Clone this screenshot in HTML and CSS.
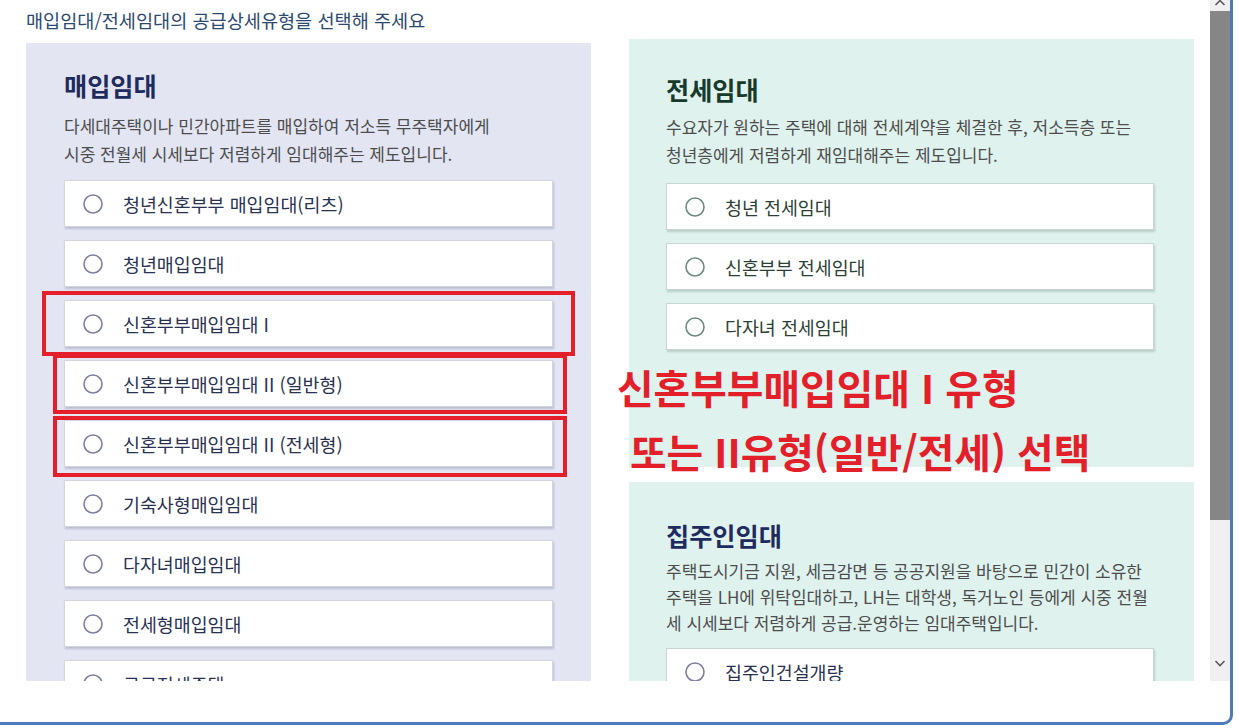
FILE: index.html
```html
<!DOCTYPE html>
<html lang="ko">
<head>
<meta charset="utf-8">
<title>공급상세유형 선택</title>
<link rel="stylesheet" href="styles.css">
</head>
<body>
<div class="window">
  <div class="viewport">
    <div class="content">
      <p class="lead">매입임대/전세임대의 공급상세유형을 선택해 주세요</p>
      <div class="columns">
        <section class="card card-buy">
          <h2 class="card-title">매입임대</h2>
          <p class="card-desc">다세대주택이나 민간아파트를 매입하여 저소득 무주택자에게<br>시중 전월세 시세보다 저렴하게 임대해주는 제도입니다.</p>
          <div class="opt"><svg class="radio" viewBox="0 0 20 20"><circle cx="10" cy="10" r="9"/></svg><span>청년신혼부부 매입임대(리츠)</span></div>
          <div class="opt"><svg class="radio" viewBox="0 0 20 20"><circle cx="10" cy="10" r="9"/></svg><span>청년매입임대</span></div>
          <div class="opt"><svg class="radio" viewBox="0 0 20 20"><circle cx="10" cy="10" r="9"/></svg><span>신혼부부매입임대 I</span></div>
          <div class="opt"><svg class="radio" viewBox="0 0 20 20"><circle cx="10" cy="10" r="9"/></svg><span>신혼부부매입임대 II (일반형)</span></div>
          <div class="opt"><svg class="radio" viewBox="0 0 20 20"><circle cx="10" cy="10" r="9"/></svg><span>신혼부부매입임대 II (전세형)</span></div>
          <div class="opt"><svg class="radio" viewBox="0 0 20 20"><circle cx="10" cy="10" r="9"/></svg><span>기숙사형매입임대</span></div>
          <div class="opt"><svg class="radio" viewBox="0 0 20 20"><circle cx="10" cy="10" r="9"/></svg><span>다자녀매입임대</span></div>
          <div class="opt"><svg class="radio" viewBox="0 0 20 20"><circle cx="10" cy="10" r="9"/></svg><span>전세형매입임대</span></div>
          <div class="opt"><svg class="radio" viewBox="0 0 20 20"><circle cx="10" cy="10" r="9"/></svg><span>공공전세주택</span></div>
        </section>
        <div class="col-right">
          <section class="card card-jeonse">
            <h2 class="card-title">전세임대</h2>
            <p class="card-desc">수요자가 원하는 주택에 대해 전세계약을 체결한 후, 저소득층 또는<br>청년층에게 저렴하게 재임대해주는 제도입니다.</p>
            <div class="opt"><svg class="radio" viewBox="0 0 20 20"><circle cx="10" cy="10" r="9"/></svg><span>청년 전세임대</span></div>
            <div class="opt"><svg class="radio" viewBox="0 0 20 20"><circle cx="10" cy="10" r="9"/></svg><span>신혼부부 전세임대</span></div>
            <div class="opt"><svg class="radio" viewBox="0 0 20 20"><circle cx="10" cy="10" r="9"/></svg><span>다자녀 전세임대</span></div>
          </section>
          <section class="card card-landlord">
            <h2 class="card-title">집주인임대</h2>
            <p class="card-desc">주택도시기금 지원, 세금감면 등 공공지원을 바탕으로 민간이 소유한<br>주택을 LH에 위탁임대하고, LH는 대학생, 독거노인 등에게 시중 전월<br>세 시세보다 저렴하게 공급.운영하는 임대주택입니다.</p>
            <div class="opt"><svg class="radio" viewBox="0 0 20 20"><circle cx="10" cy="10" r="9"/></svg><span>집주인건설개량</span></div>
          </section>
        </div>
      </div>

      <div class="mark mark-1"></div>
      <div class="mark mark-2"></div>
      <div class="mark mark-3"></div>
      <div class="note">
        <div class="note-line">신혼부부매입임대 I 유형</div>
        <div class="note-line note-line-2">또는 II유형(일반/전세) 선택</div>
      </div>
    </div>
    <div class="scrollbar">
      <div class="sb-btn sb-up"><svg viewBox="0 0 20 11" width="20" height="11"><path d="M5.5 5 L10 0.5 L14.5 5"/></svg></div>
      <div class="sb-thumb"></div>
      <div class="sb-track"></div>
      <div class="sb-btn sb-down"><svg viewBox="0 0 20 30" width="20" height="30"><path d="M5.5 10 L10 14.5 L14.5 10"/></svg></div>
    </div>
  </div>
</div>
</body>
</html>
```

FILE: styles.css
```css
* { box-sizing: border-box; }
html, body { margin: 0; padding: 0; background: #fff; }
body { font-family: "Noto Sans CJK KR", "Noto Sans", sans-serif; }

.window {
  width: 1233px;
  height: 725px;
  border-right: 3px solid #4f79bd;
  border-bottom: 3px solid #4f79bd;
  border-bottom-right-radius: 10px;
  overflow: hidden;
  background: #fff;
}
.viewport { display: flex; height: 681px; }
.content {
  flex: 1;
  position: relative;
  overflow: hidden;
  padding: 8px 16px 0 26px;
}

.lead {
  margin: 0 0 7px;
  font-size: 18.6px;
  line-height: 24px;
  color: #2d4a70;
  white-space: nowrap;
}

.columns { display: flex; gap: 38px; align-items: flex-start; }
.col-right { display: flex; flex-direction: column; gap: 15px; }

.card { width: 565px; }
.card-title {
  margin: 0;
  font-size: 25.2px;
  line-height: 30px;
  font-weight: 700;
  color: #1e2b5e;
}
.card-desc {
  margin: 0;
  font-size: 17px;
  line-height: 28px;
  color: #4d4d4d;
  white-space: nowrap;
}

.card-buy {
  margin-top: 4px;
  background: #e3e5f3;
  padding: 27px 38px 20px;
}
.card-buy .card-title { margin-bottom: 12px; }
.card-buy .card-desc { margin-bottom: 12px; }

.card-jeonse {
  height: 428px;
  background: #dff2ee;
  padding: 35px 40px 0 37px;
}
.card-jeonse .card-title { color: #173a2d; margin-bottom: 9px; }
.card-jeonse .card-desc { margin-bottom: 14px; }

.card-landlord {
  height: 260px;
  background: #dff2ee;
  padding: 38px 40px 0 37px;
}
.card-landlord .card-title { margin-bottom: 8px; }
.card-landlord .card-desc { line-height: 26px; margin-bottom: 12px; }

.opt {
  display: flex;
  align-items: center;
  height: 47px;
  margin-bottom: 13px;
  padding-left: 18px;
  background: #fff;
  border: 1px solid #d3d4e0;
  box-shadow: 1px 2px 2px rgba(70, 72, 110, 0.25);
  font-size: 18.4px;
  color: #2a3252;
  white-space: nowrap;
}
.radio { width: 20px; height: 20px; margin-right: 20px; flex: none; }
.radio circle { fill: #fff; stroke: #7d819e; stroke-width: 1.6; }

.card-jeonse .opt, .card-landlord .opt {
  border-color: #c9d5d0;
  box-shadow: 1px 2px 2px rgba(70, 100, 90, 0.25);
  color: #2b4136;
}
.card-jeonse .radio circle { stroke: #6f8b80; }
.card-landlord .opt { color: #2a3252; }
.card-landlord .radio circle { stroke: #7d819e; }

/* annotations overlaid on the screenshot */
.mark {
  position: absolute;
  border: 4px solid #e51f29;
}
.mark-1 { left: 42px; top: 291px; width: 533px; height: 65px; }
.mark-2 { left: 53px; top: 354px; width: 514px; height: 60px; }
.mark-3 { left: 53px; top: 416px; width: 514px; height: 61px; }

.note {
  position: absolute;
  left: 617px;
  top: 355px;
  color: #e3202a;
  font-size: 39.8px;
  font-weight: 700;
  line-height: 64px;
  white-space: nowrap;
}
.note-line-2 { padding-left: 13px; }

/* scrollbar */
.scrollbar {
  width: 20px;
  flex: none;
  display: flex;
  flex-direction: column;
  background: #f0f0f0;
}
.sb-btn svg { display: block; }
.sb-btn path { fill: none; stroke: #5a5a5a; stroke-width: 1.6; }
.sb-up { height: 11px; }
.sb-thumb { height: 509px; background: #868686; }
.sb-track { flex: 1; }
.sb-down { height: 30px; }
```
